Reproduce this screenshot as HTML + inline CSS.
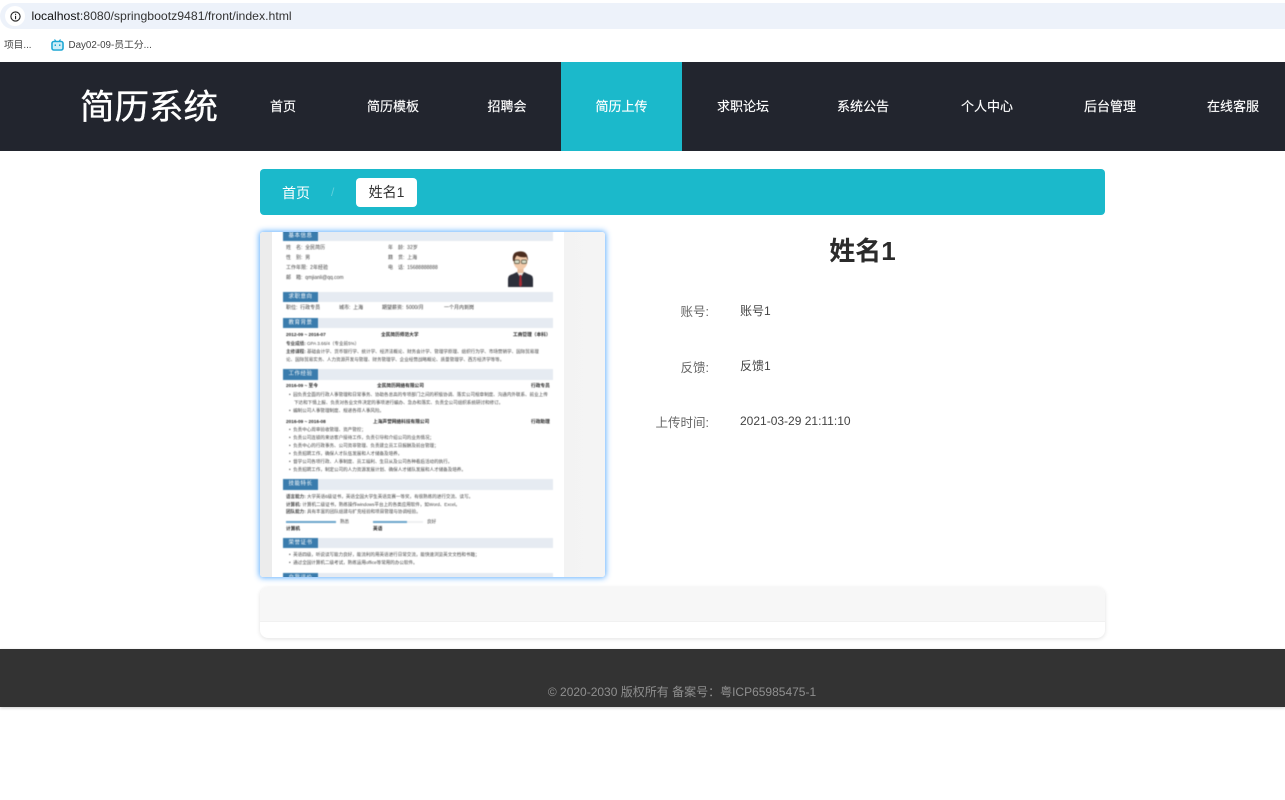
<!DOCTYPE html>
<html lang="zh-CN">
<head>
<meta charset="utf-8">
<title>简历系统</title>
<style>
html,body{margin:0;padding:0;width:1285px;height:800px;overflow:hidden;background:#fff;}
body{position:relative;font-family:"Liberation Sans","Noto Sans CJK SC",sans-serif;color:#333;}
.a{position:absolute;white-space:nowrap;}
.nav{position:absolute;top:62px;left:0;width:1285px;height:89px;background:#22252e;}
.ni{position:absolute;top:0;height:89px;line-height:89px;width:120px;text-align:center;color:#fff;font-size:13px;-webkit-text-stroke:.15px #fff;}
.ni.on{background:#1bb9cb;left:561px;width:121px;}
.box{position:absolute;left:260px;top:232px;width:345px;height:345px;background:linear-gradient(90deg,#ececec 0,#f4f4f4 100%);border-radius:3px;box-shadow:0 0 6px 1px rgba(85,170,255,.9);overflow:hidden;}
.paper{position:absolute;left:12px;top:0;width:292px;height:345px;background:#fff;}
.res{position:absolute;left:-260px;top:-232px;width:1285px;height:800px;filter:blur(.45px);}
.r{position:absolute;white-space:nowrap;font-size:4.55px;line-height:8px;height:8px;color:#444;}
.b{font-size:5px;}
.d{color:#222;font-weight:bold;font-size:4.7px;}
.band{position:absolute;left:283px;width:270px;height:10px;background:#e6ebf2;}
.tab{position:absolute;left:283px;width:35px;height:10px;line-height:10px;background:#3a7cad;color:#fff;font-size:5.5px;text-align:center;letter-spacing:.5px;}
.bar{position:absolute;height:2px;background:#6ba6cc;}
.lab{position:absolute;right:576px;font-size:12.5px;line-height:18px;color:#666;white-space:nowrap;}
.val{position:absolute;left:740px;font-size:12px;line-height:18px;color:#444;white-space:nowrap;}
</style>
</head>
<body>
<div class="a" style="left:0;top:3px;width:1285px;height:26px;background:#edf2fa;border-radius:13px 0 0 13px;"></div>
<div class="a" style="left:5px;top:6px;width:20px;height:20px;background:#fff;border-radius:50%;"></div>
<svg class="a" style="left:10px;top:11px" width="11" height="11" viewBox="0 0 11 11"><circle cx="5.5" cy="5.5" r="4.6" fill="none" stroke="#222" stroke-width="1.1"/><rect x="5" y="4.8" width="1.1" height="3.4" fill="#222"/><rect x="5" y="2.8" width="1.1" height="1.1" fill="#222"/></svg>
<div class="a" style="left:31.5px;top:8px;font-size:12.25px;line-height:17px;color:#333;"><span style="color:#111">localhost</span>:8080/springbootz9481/front/index.html</div>
<div class="a" style="left:4px;top:38px;font-size:9.7px;line-height:15px;color:#444;">项目...</div>
<svg class="a" style="left:51px;top:39px" width="13" height="12" viewBox="0 0 13 12"><path d="M3.5 .5L5 2.5M9.5 .5L8 2.5" stroke="#1ba6d4" stroke-width="1.1" fill="none"/><rect x="1" y="2.5" width="11" height="8.5" rx="1.8" fill="none" stroke="#1ba6d4" stroke-width="1.6"/><rect x="2" y="3.5" width="9" height="6.5" fill="#cdeef8"/><rect x="3.6" y="5.4" width="1.4" height="1.6" fill="#1ba6d4"/><rect x="8" y="5.4" width="1.4" height="1.6" fill="#1ba6d4"/></svg>
<div class="a" style="left:68.5px;top:38px;font-size:9.8px;line-height:15px;color:#444;">Day02-09-员工分...</div>

<div class="nav">
  <div class="a" style="left:80px;top:20px;font-size:34.5px;line-height:52px;color:#fff;-webkit-text-stroke:.35px #fff;">简历系统</div>
  <div class="ni" style="left:223px">首页</div>
  <div class="ni" style="left:333px">简历模板</div>
  <div class="ni" style="left:447px">招聘会</div>
  <div class="ni on">简历上传</div>
  <div class="ni" style="left:683px">求职论坛</div>
  <div class="ni" style="left:803px">系统公告</div>
  <div class="ni" style="left:927px">个人中心</div>
  <div class="ni" style="left:1050px">后台管理</div>
  <div class="ni" style="left:1173px">在线客服</div>
</div>

<div class="a" style="left:260px;top:169px;width:845px;height:46px;background:#1bb9cb;border-radius:4px;"></div>
<div class="a" style="left:282px;top:182px;font-size:14px;line-height:22px;color:#fff;">首页</div>
<div class="a" style="left:331px;top:183px;font-size:12px;line-height:18px;color:#5fcfdb;">/</div>
<div class="a" style="left:356px;top:178px;width:61px;height:29px;line-height:29px;background:#fff;border-radius:4px;text-align:center;font-size:14px;color:#333;">姓名1</div>

<div class="box">
  <div class="paper"></div>
  <div class="res">
    <div class="band" style="top:231px"></div><div class="tab" style="top:231px">基本信息</div>
    <div class="r b" style="left:286px;top:244px">姓　名:&nbsp; 全民简历</div><div class="r b" style="left:388px;top:244px">年　龄:&nbsp; 32岁</div>
    <div class="r b" style="left:286px;top:254px">性　别:&nbsp; 男</div><div class="r b" style="left:388px;top:254px">籍　贯:&nbsp; 上海</div>
    <div class="r b" style="left:286px;top:264px">工作年限:&nbsp; 2年经验</div><div class="r b" style="left:388px;top:264px">电　话:&nbsp; 15688888888</div>
    <div class="r b" style="left:286px;top:274px">邮　箱:&nbsp; qmjianli@qq.com</div>
    <svg class="a" style="left:507px;top:250px" width="27" height="38" viewBox="0 0 27 38">
      <path d="M1 37V29Q1 25 6 24L10 22H17L21 24Q26 25 26 29V37Z" fill="#2c2f3a"/>
      <path d="M10 22L13.5 28L17 22Z" fill="#f3ede6"/>
      <path d="M12.6 25H14.4L15 35L13.5 37L12 35Z" fill="#a82a35"/>
      <rect x="10.5" y="17" width="6" height="6" fill="#e8bd9d"/>
      <ellipse cx="13.5" cy="11" rx="7" ry="8.5" fill="#f1c9a9"/>
      <path d="M6 11Q4.500 2 12 1.500Q21 0 21 11L19.500 7Q14 8 10 5.500Q8 7 7.500 11Z" fill="#4b2c1e"/>
      <rect x="7.500" y="10" width="5" height="3.500" rx="1" fill="#d9dcc8" stroke="#4a4a3a" stroke-width=".7"/>
      <rect x="14.500" y="10" width="5" height="3.500" rx="1" fill="#d9dcc8" stroke="#4a4a3a" stroke-width=".7"/>
    </svg>

    <div class="band" style="top:292px"></div><div class="tab" style="top:292px">求职意向</div>
    <div class="r b" style="left:286px;top:304px;color:#333">职位:&nbsp; 行政专员</div><div class="r b" style="left:339px;top:304px;color:#333">城市:&nbsp; 上海</div><div class="r b" style="left:382px;top:304px;color:#333">期望薪资:&nbsp; 5000/月</div><div class="r b" style="left:444px;top:304px;color:#333">一个月内到岗</div>

    <div class="band" style="top:318px"></div><div class="tab" style="top:318px">教育背景</div>
    <div class="r d" style="left:286px;top:331px">2012-09 ~ 2016-07</div><div class="r d" style="left:381px;top:331px">全民简历师范大学</div><div class="r d" style="left:513px;top:331px">工商管理（本科）</div>
    <div class="r" style="left:286px;top:340px"><b>专业成绩:</b> GPA 3.66/4（专业前5%）</div>
    <div class="r" style="left:286px;top:348px"><b>主修课程:</b> 基础会计学、货币银行学、统计学、经济法概论、财务会计学、管理学原理、组织行为学、市场营销学、国际贸易理</div>
    <div class="r" style="left:286px;top:356px">论、国际贸易实务、人力资源开发与管理、财务管理学、企业经营战略概论、质量管理学、西方经济学等等。</div>

    <div class="band" style="top:369px;height:11px"></div><div class="tab" style="top:369px;height:11px">工作经验</div>
    <div class="r d" style="left:286px;top:382px">2016-09 ~ 至今</div><div class="r d" style="left:377px;top:382px">全民简历网络有限公司</div><div class="r d" style="left:531px;top:382px">行政专员</div>
    <div class="r" style="left:289px;top:391px">•&nbsp; 园负责全面的行政人事管理和日常事务、协助各总高的专项部门之间的积极协调、落实公司规章制度、沟通内外联系、前业上传</div>
    <div class="r" style="left:294px;top:399px">下达和下情上报、负责对各业文件决定的事项进行编办、急办和落实、负责全公司组织系统研讨和修订。</div>
    <div class="r" style="left:289px;top:407px">•&nbsp; 编制公司人事管理制度、规递各得人事风险。</div>
    <div class="r d" style="left:286px;top:418px">2016-09 ~ 2016-08</div><div class="r d" style="left:373px;top:418px">上海声誉网络科技有限公司</div><div class="r d" style="left:531px;top:418px">行政助理</div>
    <div class="r" style="left:289px;top:426px">•&nbsp; 负责中心周审验收管理、资产管控；</div>
    <div class="r" style="left:289px;top:434px">•&nbsp; 负责公司连锁的来访客户接待工作，负责引导和介绍公司的业务情况；</div>
    <div class="r" style="left:289px;top:442px">•&nbsp; 负责中心的行政事务、公司资非管理、负责建立员工日报酬及前台管理；</div>
    <div class="r" style="left:289px;top:450px">•&nbsp; 负责招聘工作，确保人才队伍发展和人才储备及培养。</div>
    <div class="r" style="left:289px;top:458px">•&nbsp; 督学公司各项行政、人事制度、员工福利、生日从及公司各种看后活动的执行。</div>
    <div class="r" style="left:289px;top:466px">•&nbsp; 负责招聘工作，制定公司的人力资源发展计划、确保人才储队发展和人才储备及培养。</div>

    <div class="band" style="top:479px;height:11px"></div><div class="tab" style="top:479px;height:11px">技能特长</div>
    <div class="r" style="left:286px;top:493px"><b>语言能力:</b> 大学英语6级证书，英语全国大学生英语竞赛一等奖，有很熟练的进行交流、读写。</div>
    <div class="r" style="left:286px;top:501px"><b>计算机:</b> 计算机二级证书，熟练操作windows平台上的各类应用软件，如Word、Excel。</div>
    <div class="r" style="left:286px;top:508px"><b>团队能力:</b> 具有丰富的团队组建与扩充经验和项目管理与协调经验。</div>
    <div class="bar" style="left:286px;top:521px;width:50px"></div><div class="r" style="left:340px;top:518px">熟悉</div>
    <div class="bar" style="left:373px;top:521px;width:50px;background:#eef0f2"></div><div class="bar" style="left:373px;top:521px;width:34px"></div><div class="r" style="left:427px;top:518px">良好</div>
    <div class="r d" style="left:286px;top:525px">计算机</div><div class="r d" style="left:373px;top:525px">英语</div>

    <div class="band" style="top:538px"></div><div class="tab" style="top:538px">荣誉证书</div>
    <div class="r" style="left:289px;top:551px">•&nbsp; 英语四级，听说读写能力良好，能流利的用英语进行日常交流，能快速浏览英文文档和书籍；</div>
    <div class="r" style="left:289px;top:559px">•&nbsp; 通过全国计算机二级考试，熟练运用office等常用的办公软件。</div>

    <div class="band" style="top:573px"></div><div class="tab" style="top:573px">自我评价</div>
  </div>
</div>

<div class="a" style="left:780px;top:234px;width:165px;text-align:center;font-size:26px;line-height:34px;font-weight:bold;color:#2b2b2b;">姓名1</div>

<div class="lab" style="top:303px">账号:</div><div class="val" style="top:302px">账号1</div>
<div class="lab" style="top:359px">反馈:</div><div class="val" style="top:357px">反馈1</div>
<div class="lab" style="top:414px">上传时间:</div><div class="val" style="top:412px">2021-03-29 21:11:10</div>

<div class="a" style="left:260px;top:587px;width:845px;height:51px;background:#fff;border-radius:8px;box-shadow:0 1px 4px rgba(0,0,0,.12);overflow:hidden;">
  <div style="height:34px;background:#f7f7f7;border-bottom:1px solid #f1f1f1;"></div>
</div>

<div class="a" style="left:0;top:649px;width:1285px;height:58px;background:#333;box-shadow:0 1px 3px rgba(0,0,0,.2);"></div>
<div class="a" style="left:0;top:683px;width:1285px;text-align:center;font-size:12px;line-height:18px;color:#8f8f8f;text-indent:79px;">© 2020-2030 版权所有 备案号：粤ICP65985475-1</div>
</body>
</html>
